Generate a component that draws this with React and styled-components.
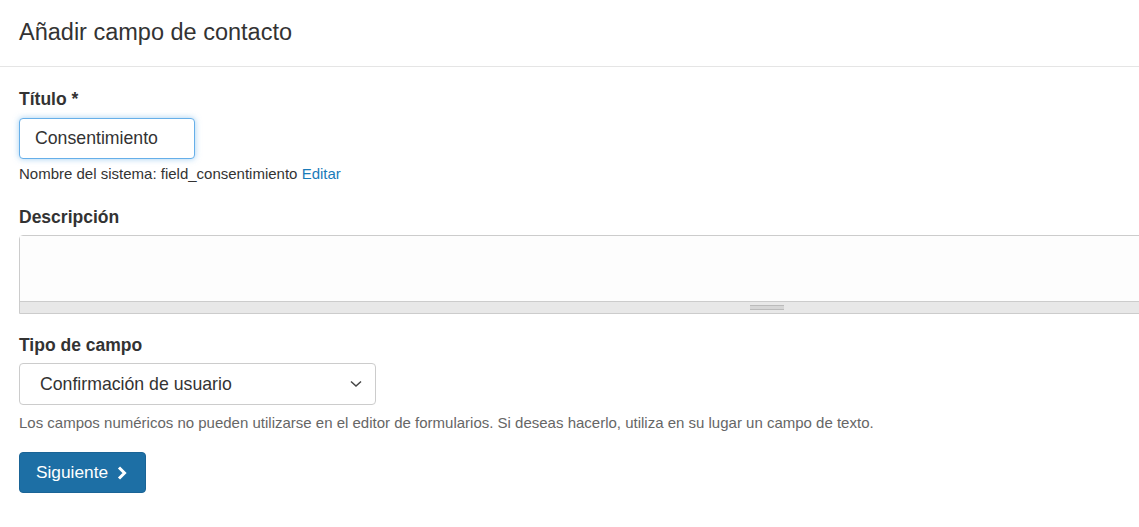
import React from "react";
import styled, { createGlobalStyle } from "styled-components";

const GlobalStyle = createGlobalStyle`
  html, body {
    margin: 0;
    padding: 0;
    background: #fff;
    overflow: hidden;
  }
  body {
    font-family: "Liberation Sans", Arial, Helvetica, sans-serif;
    color: #333;
  }
`;

const Header = styled.div`
  height: 66px;
  border-bottom: 1px solid #e5e5e5;
  padding: 0 19px;
  display: flex;
  align-items: center;
`;

const Title = styled.h2`
  margin: 0 0 2px;
  font-size: 23.5px;
  font-weight: 500;
  color: #333;
`;

const Body = styled.div`
  padding: 22px 19px 0;
`;

const Group = styled.div`
  margin-bottom: ${(p) => p.gap || "22px"};
`;

const Label = styled.label`
  display: block;
  font-size: 17.5px;
  line-height: 20px;
  font-weight: bold;
  color: #333;
  margin-bottom: ${(p) => p.gap || "9px"};
`;

const TextInput = styled.input`
  box-sizing: border-box;
  width: 176px;
  height: 41px;
  padding: 0 15px;
  font-family: inherit;
  font-size: 17.7px;
  color: #333;
  border: 1px solid #66afe9;
  border-radius: 4px;
  box-shadow: 0 0 6px rgba(102, 175, 233, 0.6);
  outline: none;
`;

const Hint = styled.div`
  font-size: 15px;
  line-height: 20px;
  color: ${(p) => (p.muted ? "#666" : "#333")};
  margin-top: ${(p) => p.top || "5px"};
`;

const Link = styled.a`
  color: #1a7bb9;
  text-decoration: none;
`;

const AreaBox = styled.div`
  box-sizing: border-box;
  width: 1496px;
  border: 1px solid #ccc;
  border-radius: 4px 4px 0 0;
`;

const Area = styled.textarea`
  display: block;
  box-sizing: border-box;
  width: 100%;
  height: 65px;
  border: none;
  resize: none;
  outline: none;
  background: #fdfdfd;
`;

const Grip = styled.div`
  height: 11px;
  background: #e8e8e8;
  border-top: 1px solid #ccc;
  display: flex;
  justify-content: center;
  align-items: center;
`;

const GripLines = styled.div`
  width: 34px;
  height: 3px;
  border-top: 1px solid #bbb;
  border-bottom: 1px solid #bbb;
  background: #d6d6d6;
`;

const SelectBox = styled.div`
  box-sizing: border-box;
  width: 357px;
  height: 42px;
  border: 1px solid #ccc;
  border-radius: 4px;
  display: flex;
  align-items: center;
  justify-content: space-between;
  padding: 0 13px 0 20px;
  font-size: 17.7px;
  color: #333;
`;

const Button = styled.button`
  display: flex;
  align-items: center;
  gap: 9px;
  height: 41px;
  padding: 0 18px 0 16px;
  background: #1d6fa5;
  color: #fff;
  border: 1px solid #1a6496;
  border-radius: 4px;
  font-family: inherit;
  font-size: 17.3px;
  cursor: pointer;
`;

function App() {
  return (
    <>
      <GlobalStyle />
      <Header>
        <Title>Añadir campo de contacto</Title>
      </Header>
      <Body>
        <Group gap="23px">
          <Label>Título *</Label>
          <TextInput defaultValue="Consentimiento" />
          <Hint>
            Nombre del sistema: field_consentimiento <Link>Editar</Link>
          </Hint>
        </Group>
        <Group gap="21px">
          <Label gap="8px">Descripción</Label>
          <AreaBox>
            <Area />
            <Grip>
              <GripLines />
            </Grip>
          </AreaBox>
        </Group>
        <Group gap="19px">
          <Label gap="8px">Tipo de campo</Label>
          <SelectBox>
            <span>Confirmación de usuario</span>
            <svg width="12" height="8" viewBox="0 0 12 8">
              <path d="M1 1.5 L6 6 L11 1.5" fill="none" stroke="#444" strokeWidth="1.5" />
            </svg>
          </SelectBox>
          <Hint muted top="8px">
            Los campos numéricos no pueden utilizarse en el editor de formularios. Si deseas hacerlo, utiliza en su lugar un campo de texto.
          </Hint>
        </Group>
        <Button>
          Siguiente
          <svg width="10" height="14" viewBox="0 0 10 14">
            <path d="M2 1.5 L7.5 7 L2 12.5" fill="none" stroke="#fff" strokeWidth="3" />
          </svg>
        </Button>
      </Body>
    </>
  );
}

export default App;
